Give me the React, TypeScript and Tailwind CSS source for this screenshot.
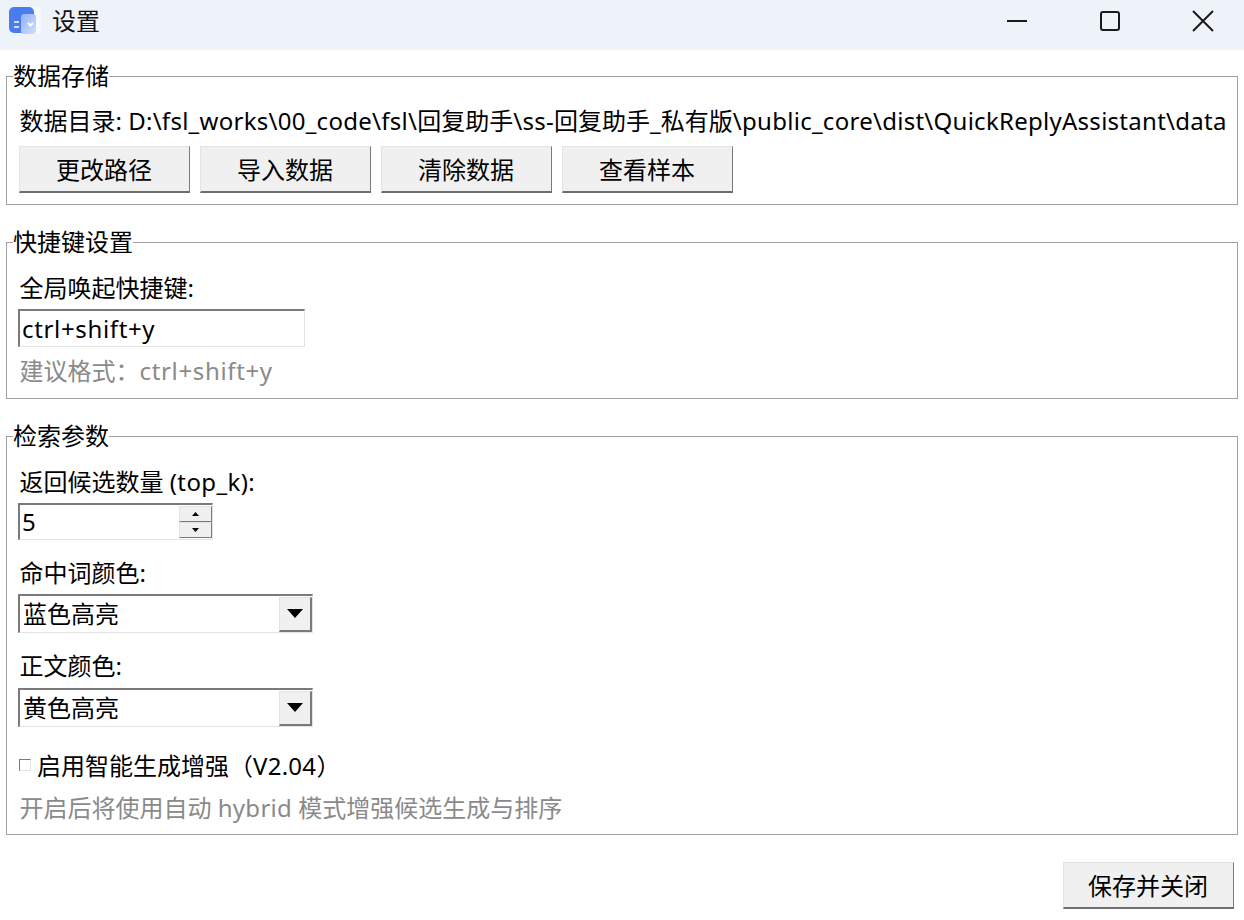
import React from 'react';

const FONT = "font-['Noto_Sans','Noto_Sans_CJK_SC',sans-serif]";

function Bevel({ label }: { label: string }) {
  return (
    <button
      type="button"
      className="h-[47px] w-[171px] border border-t-[#e3e3e3] border-l-[#e3e3e3] border-r-[#7a7a7a] border-b-2 border-b-[#6e6e6e] bg-[#f0f0f0] pt-[2px] pr-[1px] text-[24px] leading-none text-black"
    >
      {label}
    </button>
  );
}

function Group({ title, className, children }: { title: string; className?: string; children: React.ReactNode }) {
  return (
    <fieldset className={`mx-[6px] border border-[#a0a0a0] pl-[12px] pr-1 ${className ?? ''}`}>
      <legend className="-ml-[6px] h-8 text-[24px] leading-8 text-black">{title}</legend>
      {children}
    </fieldset>
  );
}

function Label({ children, className }: { children: React.ReactNode; className?: string }) {
  return <div className={`ml-[0.5px] h-8 text-[24px] leading-8 text-black whitespace-nowrap ${className ?? ''}`}>{children}</div>;
}

function Hint({ children, className }: { children: React.ReactNode; className?: string }) {
  return <div className={`ml-[0.5px] h-8 text-[24px] leading-8 text-[#8a8a8a] whitespace-nowrap ${className ?? ''}`}>{children}</div>;
}

// latin runs are set a bit wider than Noto Sans to match the screenshot's widths
function Latin({ children }: { children: React.ReactNode }) {
  return <span className="tracking-[0.27px]">{children}</span>;
}

const sunken = 'border border-t-2 border-l-2 border-t-[#7a7a7a] border-l-[#7a7a7a] border-r-[#e3e3e3] border-b-[#e3e3e3] bg-white';

function Combo({ value, className }: { value: string; className?: string }) {
  return (
    <div className={`-ml-px flex h-[39px] w-[295px] items-center ${sunken} ${className ?? ''}`}>
      <span className="flex-1 pl-[3px] text-[24px] leading-none text-black">{value}</span>
      <span className="flex h-[35px] w-[33px] items-center justify-center border-t border-l border-t-[#e3e3e3] border-l-[#e3e3e3] border-r-2 border-b-2 border-r-[#7a7a7a] border-b-[#7a7a7a] bg-[#f0f0f0]">
        <svg width="18" height="10" viewBox="0 0 18 10"><path d="M1 0h16L9 9z" fill="#000" /></svg>
      </span>
    </div>
  );
}

function SpinButton({ up }: { up?: boolean }) {
  return (
    <span className="flex h-[16px] w-full items-center justify-center border-t border-l border-t-[#e3e3e3] border-l-[#e3e3e3] border-r border-b border-r-[#7a7a7a] border-b-[#7a7a7a] bg-[#f0f0f0]">
      <svg width="8" height="4" viewBox="0 0 8 4"><path d={up ? 'M0 4h7L3.5 0z' : 'M0 0h7L3.5 4z'} fill="#000" /></svg>
    </span>
  );
}

export default function App() {
  return (
    <div className={`flex h-[920px] w-[1244px] flex-col overflow-hidden bg-white ${FONT}`}>
      <div className="flex h-[50px] shrink-0 items-center bg-[#eef2f9] pb-[9px]">
        <svg className="ml-[9px]" width="32" height="27" viewBox="0 0 32 27">
          <defs>
            <linearGradient id="fade" x1="0" y1="0" x2="1" y2="1">
              <stop offset="0" stopColor="#8fb0f8" />
              <stop offset="1" stopColor="#d5e0fb" />
            </linearGradient>
          </defs>
          <rect x="24" y="0" width="8" height="27" fill="#f7f9fd" />
          <rect x="0" y="0" width="25" height="26" rx="5" fill="#4a7cf0" />
          <rect x="12" y="7" width="15" height="20" rx="3" fill="url(#fade)" />
          <path d="M5 15h5M5 20h5" stroke="#fff" strokeWidth="1.6" />
          <path d="M19 16l2.500 2.500 2.500-2.500" stroke="#fff" strokeWidth="2" fill="none" />
        </svg>
        <span className="ml-[11px] text-[24px] leading-none text-[#111]">设置</span>
        <div className="ml-auto flex items-center">
          <svg width="22" height="22" viewBox="0 0 22 22" className="mr-[71px]"><path d="M1 11h20" stroke="#1a1a1a" strokeWidth="2" /></svg>
          <svg width="22" height="22" viewBox="0 0 22 22" className="mr-[71px]"><rect x="2" y="2" width="18" height="18" rx="2" stroke="#1a1a1a" strokeWidth="2" fill="none" /></svg>
          <svg width="22" height="22" viewBox="0 0 22 22" className="mr-[30px]"><path d="M1 1l20 20M21 1L1 21" stroke="#1a1a1a" strokeWidth="2" /></svg>
        </div>
      </div>

      <div className="flex flex-1 flex-col pt-[10px]">
        <Group title="数据存储">
          <Label className="mt-[13px]">
            数据目录: <Latin>D:\fsl_works\00_code\fsl\</Latin>回复助手<Latin>\ss-</Latin>回复助手<Latin>_</Latin>私有版<Latin>\public_core\dist\QuickReplyAssistant\data</Latin>
          </Label>
          <div className="mt-[9px] mb-[11px] flex gap-[10px]">
            <Bevel label="更改路径" />
            <Bevel label="导入数据" />
            <Bevel label="清除数据" />
            <Bevel label="查看样本" />
          </div>
        </Group>

        <Group title="快捷键设置" className="mt-[21px]">
          <Label className="mt-[14px]">全局唤起快捷键:</Label>
          <input
            readOnly
            defaultValue="ctrl+shift+y"
            className={`-ml-px mt-[5px] block h-[38px] w-[287px] px-[2px] text-[24px] leading-none tracking-[0.65px] text-black outline-none ${sunken}`}
          />
          <Hint className="mt-[8px] mb-[11px]">建议格式：<span className="tracking-[0.65px]">ctrl+shift+y</span></Hint>
        </Group>

        <Group title="检索参数" className="mt-[21px]">
          <Label className="mt-[14px]">返回候选数量 <span className="tracking-[0.4px]">(top_k):</span></Label>
          <div className={`-ml-px mt-[5px] flex h-[37px] w-[195px] items-center ${sunken}`}>
            <span className="flex-1 pl-[2px] text-[24px] leading-none text-black">5</span>
            <span className="flex h-[33px] w-[33px] flex-col">
              <SpinButton up />
              <SpinButton />
            </span>
          </div>
          <Label className="mt-[17px]">命中词颜色:</Label>
          <Combo value="蓝色高亮" className="mt-[5px]" />
          <Label className="mt-[17px]">正文颜色:</Label>
          <Combo value="黄色高亮" className="mt-[6px]" />
          <div className="mt-[23px] flex h-8 items-center">
            <span className="mb-[3px] h-[12px] w-[12px] border border-t-[#7a7a7a] border-l-[#7a7a7a] border-r-[#e3e3e3] border-b-[#e3e3e3] bg-white" />
            <span className="ml-[6px] text-[24px] leading-8 text-black whitespace-nowrap">启用智能生成增强（<Latin>V2.04</Latin>）</span>
          </div>
          <Hint className="mt-[10px] mb-[10px]">开启后将使用自动 <Latin>hybrid</Latin> 模式增强候选生成与排序</Hint>
        </Group>

        <div className="mr-[10px] mt-[27px] flex justify-end">
          <Bevel label="保存并关闭" />
        </div>
      </div>
    </div>
  );
}
